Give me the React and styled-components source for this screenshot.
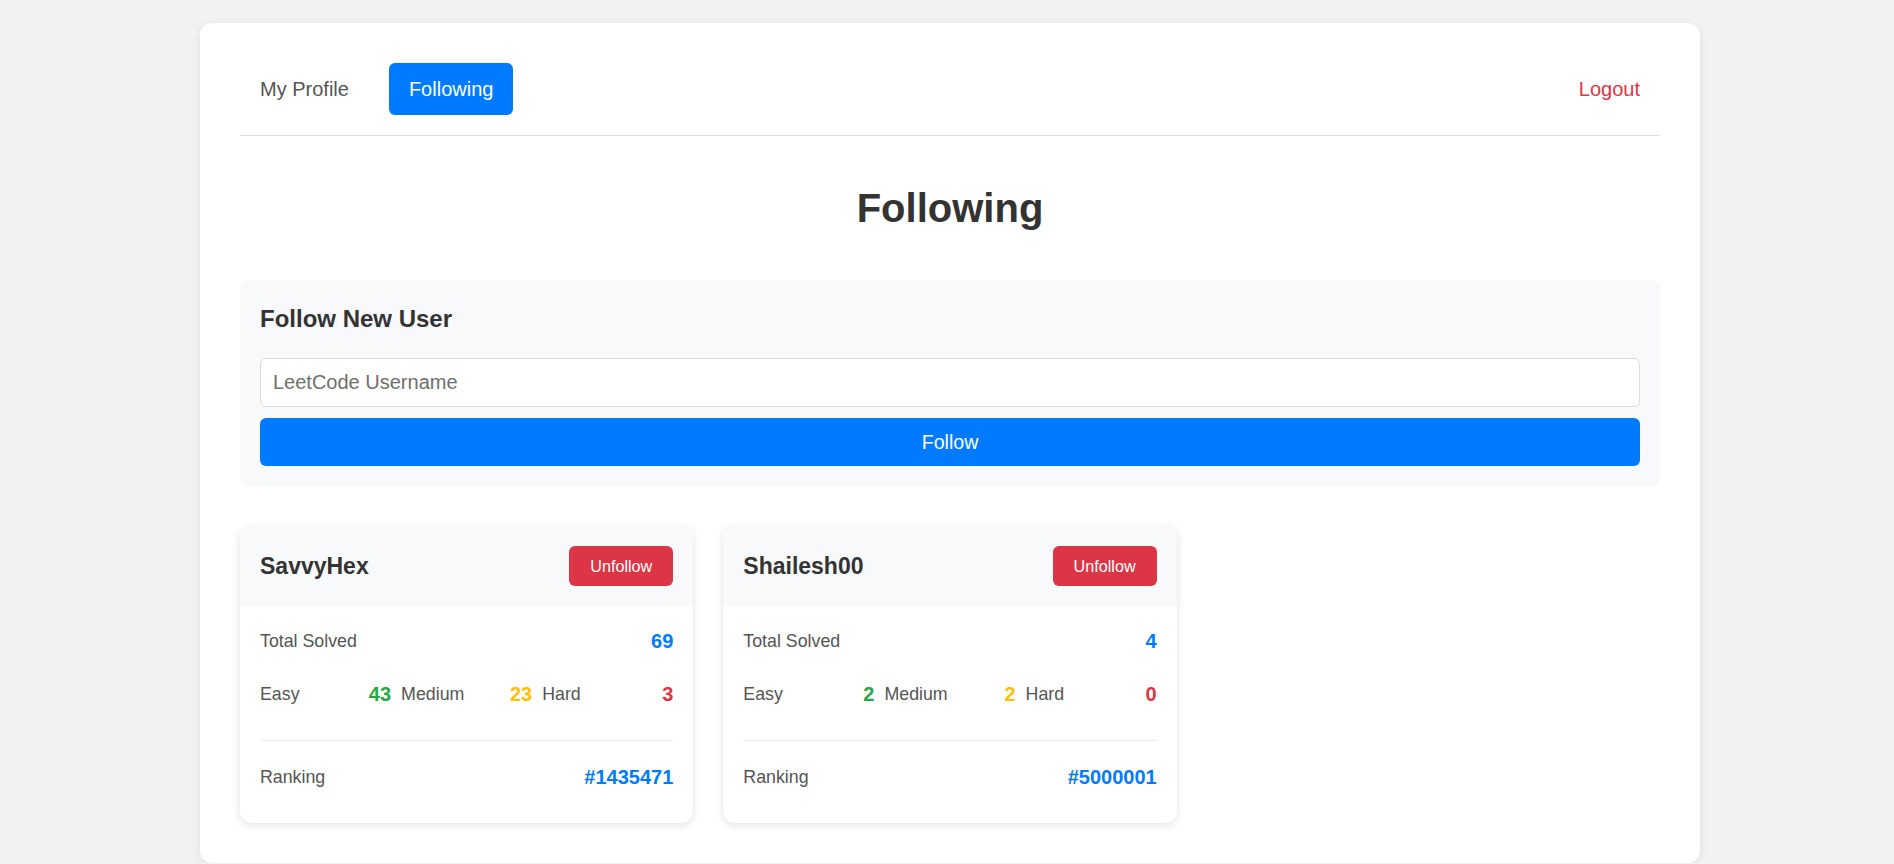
import React from 'react'
import styled, { createGlobalStyle } from 'styled-components'

const GlobalStyle = createGlobalStyle`
  * { box-sizing: border-box; }
  body {
    margin: 0;
    background: #f2f2f2;
    font-family: "Liberation Sans", Arial, sans-serif;
    line-height: 1.6;
    color: #333;
  }
`

const following = [
  { name: 'SavvyHex', total: 69, easy: 43, medium: 23, hard: 3, ranking: 1435471 },
  { name: 'Shailesh00', total: 4, easy: 2, medium: 2, hard: 0, ranking: 5000001 },
]

const App = () => {
  return (
    <Page>
      <GlobalStyle />
      <Container>
        <Nav>
          <NavLinks>
            <NavButton>My Profile</NavButton>
            <NavButton active>Following</NavButton>
          </NavLinks>
          <NavButton danger>Logout</NavButton>
        </Nav>

        <Title>Following</Title>

        <FollowBox>
          <FollowTitle>Follow New User</FollowTitle>
          <Input type="text" placeholder="LeetCode Username" />
          <FollowButton>Follow</FollowButton>
        </FollowBox>

        <CardGrid>
          {following.map((u) => (
            <Card key={u.name}>
              <CardHeader>
                <UserName>{u.name}</UserName>
                <UnfollowButton>Unfollow</UnfollowButton>
              </CardHeader>
              <CardBody>
                <StatRow>
                  <Label>Total Solved</Label>
                  <Value color="#007bff">{u.total}</Value>
                </StatRow>
                <DifficultyGrid>
                  <StatRow>
                    <Label>Easy</Label>
                    <Value color="#28a745">{u.easy}</Value>
                  </StatRow>
                  <StatRow>
                    <Label>Medium</Label>
                    <Value color="#ffc107">{u.medium}</Value>
                  </StatRow>
                  <StatRow>
                    <Label>Hard</Label>
                    <Value color="#dc3545">{u.hard}</Value>
                  </StatRow>
                </DifficultyGrid>
                <Ranking>
                  <StatRow>
                    <Label>Ranking</Label>
                    <Value color="#007bff">#{u.ranking}</Value>
                  </StatRow>
                </Ranking>
              </CardBody>
            </Card>
          ))}
        </CardGrid>
      </Container>
    </Page>
  )
}

const Page = styled.div`
  display: flex;
  justify-content: center;
  padding: 23px 0 0 6px;
`

const Container = styled.div`
  width: 1500px;
  background: #fff;
  border-radius: 12px;
  box-shadow: 0 2px 10px rgba(0, 0, 0, 0.08);
  padding: 40px;
`

const Nav = styled.nav`
  display: flex;
  justify-content: space-between;
  align-items: center;
  padding-bottom: 20px;
  border-bottom: 1px solid #ddd;
`

const NavLinks = styled.div`
  display: flex;
  gap: 20px;
`

const NavButton = styled.button`
  font-family: inherit;
  font-size: 20px;
  line-height: 1.6;
  padding: 10px 20px;
  border: none;
  border-radius: 6px;
  cursor: pointer;
  background: ${(p) => (p.active ? '#007bff' : 'transparent')};
  color: ${(p) => (p.active ? '#fff' : p.danger ? '#dc3545' : '#555')};
`

const Title = styled.h1`
  font-size: 40px;
  line-height: 64px;
  font-weight: 700;
  text-align: center;
  color: #333;
  margin: 40px 0 40px;
`

const FollowBox = styled.div`
  background: #f8f9fa;
  border-radius: 8px;
  padding: 20px;
  margin-bottom: 40px;
`

const FollowTitle = styled.h2`
  font-size: 24px;
  line-height: 38.4px;
  font-weight: 700;
  color: #333;
  margin: 0 0 20px;
`

const Input = styled.input`
  display: block;
  width: 100%;
  height: 49px;
  padding: 0 12px;
  font-family: "Liberation Sans", Arial, sans-serif;
  font-size: 20px;
  border: 1px solid #ddd;
  border-radius: 6px;
  background: #fff;
  color: #333;
  outline: none;
  margin-bottom: 11px;
  &::placeholder { color: #6f6f6f; }
`

const FollowButton = styled.button`
  display: block;
  width: 100%;
  height: 48px;
  font-family: inherit;
  font-size: 19.6px;
  color: #fff;
  background: #007bff;
  border: none;
  border-radius: 6px;
  cursor: pointer;
`

const CardGrid = styled.div`
  display: grid;
  grid-template-columns: repeat(3, 1fr);
  gap: 30px;
`

const Card = styled.div`
  background: #fff;
  border-radius: 12px;
  overflow: hidden;
  box-shadow: 0 2px 8px rgba(0, 0, 0, 0.12);
`

const CardHeader = styled.div`
  display: flex;
  justify-content: space-between;
  align-items: center;
  padding: 20px;
  background: #f8f9fa;
`

const UserName = styled.h3`
  margin: 0;
  font-size: 23px;
  font-weight: 700;
  color: #333;
`

const UnfollowButton = styled.button`
  height: 40px;
  padding: 0 21px;
  font-family: inherit;
  font-size: 16.2px;
  color: #fff;
  background: #dc3545;
  border: none;
  border-radius: 6px;
  cursor: pointer;
`

const CardBody = styled.div`
  padding: 19px 20px 31px;
  display: flex;
  flex-direction: column;
  gap: 22px;
`

const StatRow = styled.div`
  display: flex;
  justify-content: space-between;
  align-items: center;
  height: 31px;
`

const DifficultyGrid = styled.div`
  display: grid;
  grid-template-columns: repeat(3, 1fr);
  gap: 10px;
  margin-bottom: 9px;
`

const Ranking = styled.div`
  border-top: 1px solid #eee;
  padding-top: 20px;
`

const Label = styled.span`
  font-size: 17.8px;
  color: #555;
`

const Value = styled.span`
  font-size: 20px;
  font-weight: 700;
  color: ${(p) => p.color};
`

export default App
